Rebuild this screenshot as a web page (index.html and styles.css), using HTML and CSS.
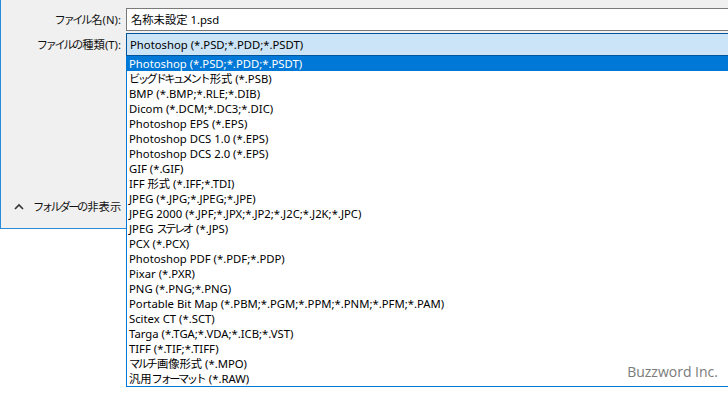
FILE: index.html
```html
<!DOCTYPE html>
<html lang="ja">
<head>
<meta charset="utf-8">
<link rel="stylesheet" href="styles.css">
</head>
<body>
<div class="window">
  <div class="form">
    <label class="label"><span class="k">ファイル</span>名(N):</label>
    <div class="input">名称未設定 1.psd</div>
    <label class="label"><span class="k">ファイルの</span>種類(T):</label>
    <div class="combo">Photoshop (*.PSD;*.PDD;*.PSDT)</div>
  </div>
  <div class="folder-toggle">
    <svg class="chev" width="10" height="7" viewBox="0 0 10 7"><path d="M1 6 L5 2 L9 6" fill="none" stroke="#333" stroke-width="1.6"/></svg>
    <span><span class="k">フォルダーの</span>非表示</span>
  </div>
</div>
<ul class="list">
  <li class="sel">Photoshop (*.PSD;*.PDD;*.PSDT)</li>
  <li><span class="k">ビッグドキュメント</span>形式 (*.PSB)</li>
  <li>BMP (*.BMP;*.RLE;*.DIB)</li>
  <li>Dicom (*.DCM;*.DC3;*.DIC)</li>
  <li>Photoshop EPS (*.EPS)</li>
  <li>Photoshop DCS 1.0 (*.EPS)</li>
  <li>Photoshop DCS 2.0 (*.EPS)</li>
  <li>GIF (*.GIF)</li>
  <li>IFF 形式 (*.IFF;*.TDI)</li>
  <li>JPEG (*.JPG;*.JPEG;*.JPE)</li>
  <li>JPEG 2000 (*.JPF;*.JPX;*.JP2;*.J2C;*.J2K;*.JPC)</li>
  <li>JPEG <span class="k">ステレオ</span> (*.JPS)</li>
  <li>PCX (*.PCX)</li>
  <li>Photoshop PDF (*.PDF;*.PDP)</li>
  <li>Pixar (*.PXR)</li>
  <li>PNG (*.PNG;*.PNG)</li>
  <li>Portable Bit Map (*.PBM;*.PGM;*.PPM;*.PNM;*.PFM;*.PAM)</li>
  <li>Scitex CT (*.SCT)</li>
  <li>Targa (*.TGA;*.VDA;*.ICB;*.VST)</li>
  <li>TIFF (*.TIF;*.TIFF)</li>
  <li><span class="k">マルチ</span>画像形式 (*.MPO)</li>
  <li>汎用<span class="k">フォーマット</span> (*.RAW)</li>
</ul>
<div class="watermark">Buzzword Inc.</div>
</body>
</html>
```
FILE: styles.css
```css
html, body {
  margin: 0;
  padding: 0;
  width: 728px;
  height: 400px;
  overflow: hidden;
  background: #ffffff;
  font-family: "Noto Sans", "Noto Sans CJK JP", sans-serif;
  font-size: 11.3px;
  color: #000;
}
.k {
  letter-spacing: -2.5px;
  padding-right: 1.5px;
}
.window {
  box-sizing: border-box;
  height: 229px;
  background: #f0f0f0;
  border-left: 1px solid #2b8ad6;
  border-bottom: 1px solid #2b8ad6;
  padding-top: 8px;
  display: flex;
  flex-direction: column;
}
.form {
  display: grid;
  grid-template-columns: 125px 1fr;
  grid-auto-rows: 23px;
  row-gap: 2px;
}
.label {
  text-align: right;
  padding-right: 5px;
  line-height: 23px;
  color: #111;
}
.input {
  box-sizing: border-box;
  background: #fff;
  border: 1px solid #7a7a7a;
  border-right: none;
  padding-left: 4px;
  line-height: 21px;
}
.combo {
  box-sizing: border-box;
  background: #cce4f7;
  border: 1px solid #005499;
  border-right: none;
  padding-left: 3px;
  line-height: 21px;
}
.folder-toggle {
  margin-top: auto;
  margin-bottom: 14px;
  display: flex;
  align-items: center;
  gap: 9px;
  padding-left: 13px;
  color: #111;
}
.list {
  position: absolute;
  left: 126px;
  top: 56px;
  width: 620px;
  margin: 0;
  padding: 0;
  list-style: none;
  background: #fff;
  border: 1px solid #0078d7;
  border-top: none;
}
.list li {
  height: 15px;
  line-height: 15px;
  padding-left: 2px;
  white-space: nowrap;
}
.list li.sel {
  background: #0078d7;
  color: #fff;
}
.watermark {
  position: absolute;
  right: 10px;
  top: 362px;
  font-family: "Open Sans", sans-serif;
  font-size: 14px;
  color: #7a7a7a;
}
```
